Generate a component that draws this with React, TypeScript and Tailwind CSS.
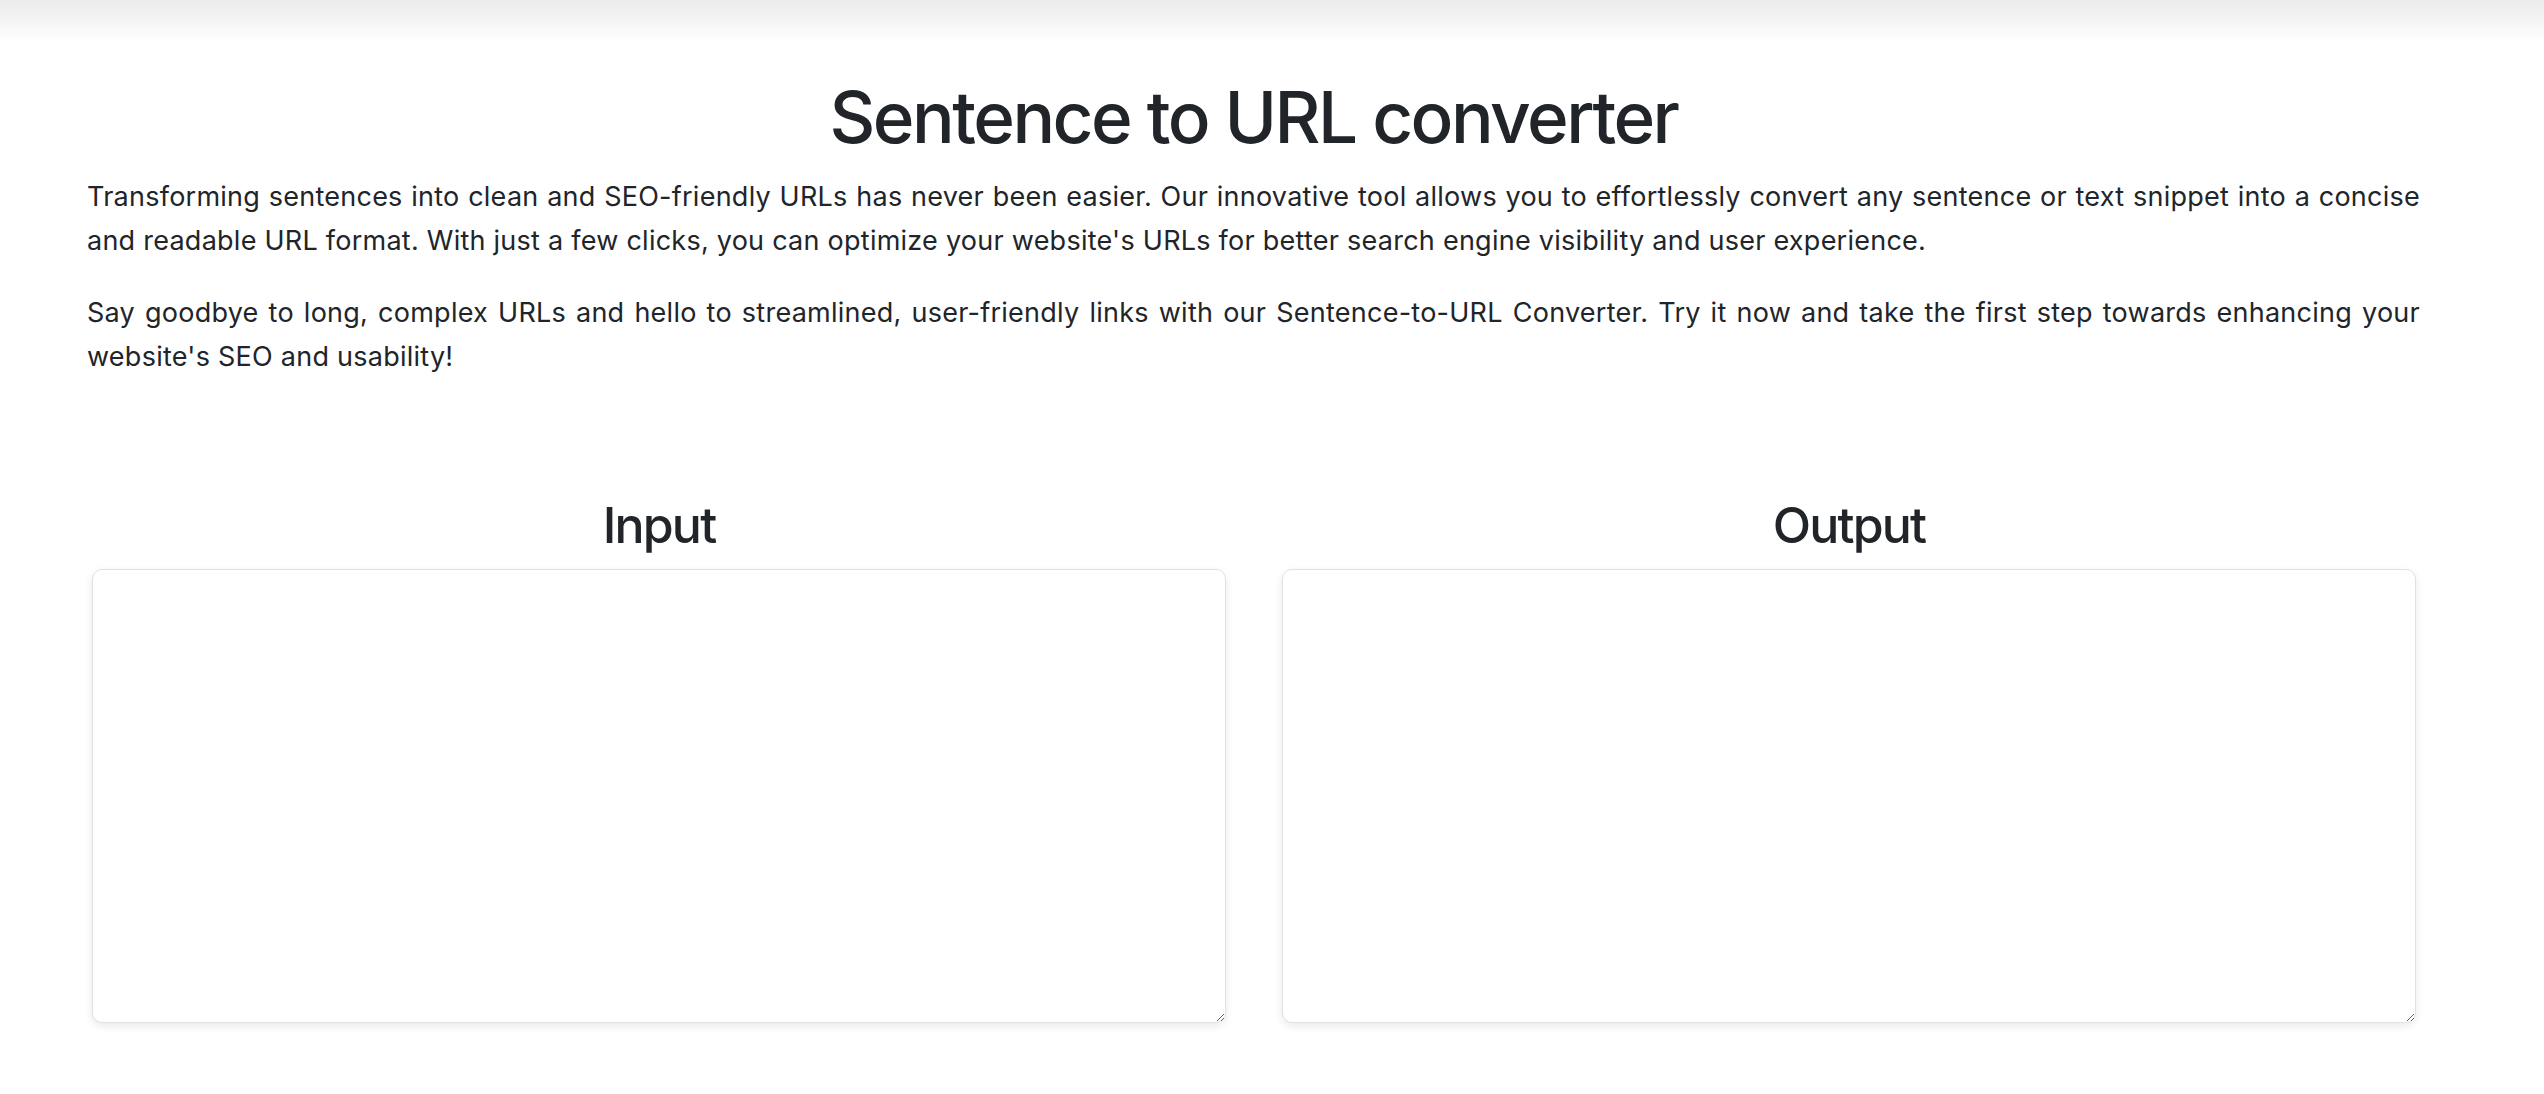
import React from 'react';

const Panel = ({ title }: { title: string }) => {
  return (
    <div className="flex flex-col">
      <h2 className="mb-[14px] text-center text-[50px] leading-[1.2] font-medium tracking-[-1.8px]">{title}</h2>
      <textarea className="h-[454px] w-full rounded-[10px] border border-[#dee2e6] bg-white px-4 py-3 text-[26px] shadow-[0_3px_8px_rgba(0,0,0,0.09)] outline-none" />
    </div>
  );
};

export default function App() {
  return (
    <div className="min-h-screen bg-white font-['Inter',sans-serif] text-[#212529]">
      <div className="h-[42px] bg-linear-to-b from-[#ebebeb] to-white" />

      <main className="pt-[33px] pr-[124px] pl-[87px]">
        <h1 className="mb-[15px] text-center text-[71px] leading-[1.2] font-medium tracking-[-2.5px]">
          Sentence to URL converter
        </h1>

        <p className="mb-[28px] text-justify text-[27px] leading-[44px] tracking-[0.25px]">
          Transforming sentences into clean and SEO-friendly URLs has never been easier. Our innovative tool allows you
          to effortlessly convert any sentence or text snippet into a concise and readable URL format. With just a few
          clicks, you can optimize your website's URLs for better search engine visibility and user experience.
        </p>

        <p className="text-justify text-[27px] leading-[44px] tracking-[0.25px]">
          Say goodbye to long, complex URLs and hello to streamlined, user-friendly links with our Sentence-to-URL
          Converter. Try it now and take the first step towards enhancing your website's SEO and usability!
        </p>

        {/* input / output */}
        <section className="mt-[116px] grid grid-cols-2 gap-[56px] pr-[4px] pl-[5px]">
          <Panel title="Input" />
          <Panel title="Output" />
        </section>
      </main>
    </div>
  );
}
